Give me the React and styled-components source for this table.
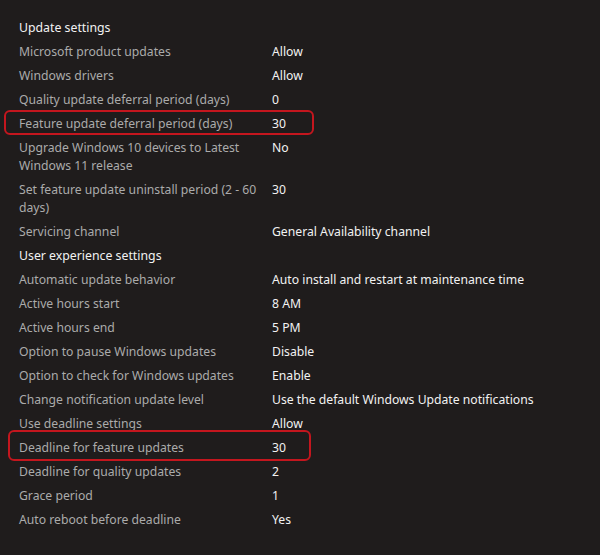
import React from "react";
import styled, { createGlobalStyle } from "styled-components";

const GlobalStyle = createGlobalStyle`
  html, body {
    margin: 0;
    padding: 0;
    background: #1f1c1c;
  }
  body {
    font-family: "Noto Sans", "Open Sans", sans-serif;
  }
`;

const Panel = styled.div`
  width: 600px;
  height: 555px;
  box-sizing: border-box;
  padding: 16px 0 0 19px;
  background: #1f1c1c;
  overflow: hidden;
`;

const Heading = styled.div`
  height: 24px;
  line-height: 24px;
  font-size: 12.3px;
  color: #f2f2f2;
`;

const Row = styled.div`
  position: relative;
  display: grid;
  grid-template-columns: 245px 1fr;
  column-gap: 8px;
  padding: 3px 0;
  line-height: 18px;
  font-size: 12.2px;

  ${({ $box }) =>
    $box &&
    `
    &::after {
      content: "";
      position: absolute;
      left: ${$box.left}px;
      top: ${$box.top}px;
      width: ${$box.width}px;
      height: ${$box.height}px;
      border: 2px solid #c4161e;
      border-radius: 6px;
      box-sizing: border-box;
      pointer-events: none;
    }
  `}
`;

const Label = styled.div`
  color: #ababab;
`;

const Value = styled.div`
  color: #f2f2f2;
`;

const sections = [
  {
    title: "Update settings",
    rows: [
      ["Microsoft product updates", "Allow"],
      ["Windows drivers", "Allow"],
      ["Quality update deferral period (days)", "0"],
      ["Feature update deferral period (days)", "30", { left: -15, top: -2, width: 310, height: 25 }],
      ["Upgrade Windows 10 devices to Latest Windows 11 release", "No"],
      ["Set feature update uninstall period (2 - 60 days)", "30"],
      ["Servicing channel", "General Availability channel"],
    ],
  },
  {
    title: "User experience settings",
    rows: [
      ["Automatic update behavior", "Auto install and restart at maintenance time"],
      ["Active hours start", "8 AM"],
      ["Active hours end", "5 PM"],
      ["Option to pause Windows updates", "Disable"],
      ["Option to check for Windows updates", "Enable"],
      ["Change notification update level", "Use the default Windows Update notifications"],
      ["Use deadline settings", "Allow"],
      ["Deadline for feature updates", "30", { left: -11, top: -6, width: 303, height: 31 }],
      ["Deadline for quality updates", "2"],
      ["Grace period", "1"],
      ["Auto reboot before deadline", "Yes"],
    ],
  },
];

export default function App() {
  return (
    <Panel>
      <GlobalStyle />
      {sections.map((s) => (
        <React.Fragment key={s.title}>
          <Heading>{s.title}</Heading>
          {s.rows.map(([label, value, box]) => (
            <Row key={label} $box={box}>
              <Label>{label}</Label>
              <Value>{value}</Value>
            </Row>
          ))}
        </React.Fragment>
      ))}
    </Panel>
  );
}
